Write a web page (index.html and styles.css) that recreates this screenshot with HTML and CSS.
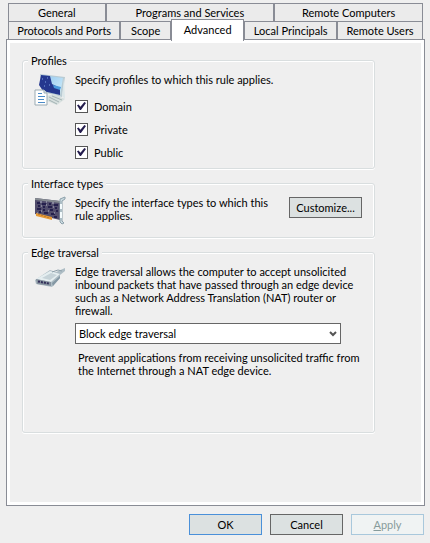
FILE: index.html
```
<!DOCTYPE html>
<html lang="en">
<head>
  <meta charset="UTF-8">
  <meta name="viewport" content="width=device-width, initial-scale=1.0">
  <title>Rule Properties</title>
  <link rel="stylesheet" href="styles.css">
</head>
<body>
  <form class="dialog">
    <div class="tabs" role="tablist">
      <div class="tab-row">
        <button type="button" class="tab tab-general" role="tab">General</button>
        <button type="button" class="tab tab-programs" role="tab">Programs and Services</button>
        <button type="button" class="tab tab-computers" role="tab">Remote Computers</button>
      </div>
      <div class="tab-row">
        <button type="button" class="tab tab-protocols" role="tab">Protocols and Ports</button>
        <button type="button" class="tab tab-scope" role="tab">Scope</button>
        <button type="button" class="tab tab-advanced active" role="tab" aria-selected="true">Advanced</button>
        <button type="button" class="tab tab-principals" role="tab">Local Principals</button>
        <button type="button" class="tab tab-users" role="tab">Remote Users</button>
      </div>
    </div>

    <div class="panel" role="tabpanel">
      <fieldset class="group profiles">
        <legend>Profiles</legend>
        <div class="group-body">
          <svg class="icon" width="32" height="34" viewBox="0 0 32 34">
            <defs>
              <linearGradient id="screen" x1="0" y1="0" x2="1" y2="1">
                <stop offset="0" stop-color="#8fc4ee"/>
                <stop offset="1" stop-color="#d4f0fb"/>
              </linearGradient>
            </defs>
            <path d="M6 1 L31 4 L28 24 L9 19 Z" fill="#b9cbd3"/>
            <path d="M7 2 L29 5 L26 22 L10 18 Z" fill="url(#screen)"/>
            <path d="M7 2 L16 3 L18 11 L26 15 L26 22 L9 18 L5 12 Z" fill="#25388f"/>
            <path d="M19 12 L27 14 L26 17 L20 15 Z" fill="#4b9ade"/>
            <path d="M8 6h1M11 9h1M13 5h1M10 13h1M15 12h1" stroke="#7ea4e4"/>
            <path d="M13 23 L20 21 L31 26 L23 32 L13 28 Z" fill="#d7e0df"/>
            <path d="M15 24 L25 29 M18 23 L28 27 M15 27 L23 31" stroke="#a4b3b5"/>
            <path d="M30 5 L31 26 L28 23 Z" fill="#dce7e9"/>
            <path d="M1 17 H10 L13 20 V32 H1 Z" fill="#fff" stroke="#9babb3"/>
            <path d="M10 17 V20 H13" fill="#dce9f0" stroke="#9babb3"/>
            <path d="M4 20.5h4M4 23.5h7M4 26.5h6M4 29.5h7" stroke="#4b8bc8"/>
          </svg>
          <div class="content">
            <p>Specify profiles to which this rule applies.</p>
            <div class="checks">
              <label class="check"><input type="checkbox" checked>Domain</label>
              <label class="check"><input type="checkbox" checked>Private</label>
              <label class="check"><input type="checkbox" checked>Public</label>
            </div>
          </div>
        </div>
      </fieldset>

      <fieldset class="group interfaces">
        <legend>Interface types</legend>
        <div class="group-body">
          <svg class="icon" width="32" height="30" viewBox="0 0 32 30">
            <path d="M1 2 L26 5 V24 L1 18 Z" fill="#514d6c"/>
            <path d="M1 2 L26 5 V7 L1 4 Z" fill="#858b91"/>
            <path d="M3 7h3M8 8h4M15 8h2M20 9h4M4 10h2M9 11h2M14 11h4M21 12h2M3 13h4M9 14h2M16 14h3M22 15h2M5 16h2M10 17h4M17 18h4M20 21h3" stroke="#25204d" stroke-width="2"/>
            <path d="M6 6h2M12 6h1M18 7h2M7 10h1M12 9h1M19 11h1M7 15h1M14 15h1M20 17h1M3 17h1" stroke="#b9bccb"/>
            <path d="M2 17 L18 21 V24 L2 20 Z" fill="#e69a35"/>
            <path d="M5 18v1M8 19v1M11 20v1M14 21v1" stroke="#a86824"/>
            <path d="M26 3 L31 1 V3 L28 5 V25 L30 27 L28 28 L26 26 Z" fill="#cadae0" stroke="#8da0aa"/>
            <path d="M27 8v5M27 16v6" stroke="#f4fbfd" stroke-width="2"/>
          </svg>
          <div class="content">
            <p>Specify the interface types to which this<br>rule applies.</p>
          </div>
          <button type="button" class="button customize">Customize...</button>
        </div>
      </fieldset>

      <fieldset class="group traversal">
        <legend>Edge traversal</legend>
        <div class="group-body">
          <svg class="icon" width="32" height="26" viewBox="0 0 32 26">
            <path d="M1 15 L16 5 L22 7 L31 3 L31 6 L26 10 V13 L18 22 L2 19 Z" fill="#aebdc5"/>
            <path d="M2 14 L16 6 L26 9 L17 17 Z" fill="#e5eef0"/>
            <path d="M8 13 L17 8 L23 10 L16 15 Z" fill="#c6d3d8"/>
            <path d="M18 7 L24 5 L28 6" fill="none" stroke="#8da0aa"/>
            <path d="M2 14 L17 17 V21 L3 19 Z" fill="#87939f"/>
            <path d="M4 16.5 L15 18.5" stroke="#322e59" stroke-width="2" stroke-dasharray="2 1"/>
            <path d="M18 18 L26 11 V13 L19 21 Z" fill="#8498a4"/>
          </svg>
          <div class="content">
            <p>Edge traversal allows the computer to accept unsolicited<br>inbound packets that have passed through an edge device<br>such as a Network Address Translation (NAT) router or<br>firewall.</p>
            <div class="select-box">
              <select aria-label="Edge traversal">
                <option>Block edge traversal</option>
              </select>
              <svg class="arrow" width="8" height="6" viewBox="0 0 8 6">
                <path d="M1 1 L4 4 L7 1" fill="none" stroke="#555" stroke-width="2"/>
              </svg>
            </div>
            <p class="hint">Prevent applications from receiving unsolicited traffic from<br>the Internet through a NAT edge device.</p>
          </div>
        </div>
      </fieldset>
    </div>

    <div class="actions">
      <button type="button" class="button default">OK</button>
      <button type="button" class="button">Cancel</button>
      <button type="button" class="button" disabled><u>A</u>pply</button>
    </div>
  </form>
</body>
</html>
```
FILE: styles.css
```
* {
  box-sizing: border-box;
}

body {
  margin: 0;
  background: #efefef;
  color: #000;
  font-family: Lato, "Liberation Sans", sans-serif;
  font-size: 11px;
  line-height: 13px;
}

button,
select,
input {
  margin: 0;
  color: inherit;
  font: inherit;
}

p {
  margin: 0;
  white-space: nowrap;
}

.dialog {
  padding: 3px 5px 0 6px;
}

/* Two rows of tabs */
.tabs {
  padding: 0 2px;
}

.tab-row {
  display: flex;
  height: 18px;
}

.tab {
  flex: 1 1 0;
  padding: 0;
  border: 1px solid #898c95;
  border-bottom: 0;
  background: #ebebeb;
  white-space: nowrap;
}

.tab-general { flex-grow: 97; }
.tab-programs { flex-grow: 169; }
.tab-computers { flex-grow: 149; }
.tab-protocols { flex-grow: 113; }
.tab-scope { flex-grow: 50; }
.tab-advanced { flex-grow: 73; }
.tab-principals { flex-grow: 93; }
.tab-users { flex-grow: 86; }

/* The open tab covers the edge of the panel */
.tab.active {
  position: relative;
  z-index: 1;
  height: 22px;
  margin-top: -2px;
  padding-bottom: 2px;
  background: #fff;
}

.panel {
  padding: 14px 49px 72px 15px;
  border: 1px solid #898c95;
  box-shadow: inset 0 0 0 3px #fff;
}

/* Group boxes */
.group {
  min-width: 0;
  margin: 0 0 8px;
  padding: 0 12px 0 11px;
  border: 1px solid #d9dedf;
  border-radius: 3px;
  box-shadow: inset 1px 1px 0 #fff, inset -1px 0 0 #fff, 0 1px 0 #fff;
}

.group:last-child {
  margin-bottom: 0;
}

.group legend {
  margin-left: -6px;
  padding: 0 3px;
  background: #efefef;
}

.group-body {
  display: flex;
  align-items: flex-start;
}

.icon {
  flex: none;
  margin-right: 9px;
}

.content {
  flex: 1;
}

.profiles .group-body {
  padding: 6px 0 9px;
}

.interfaces .group-body {
  padding: 6px 0 11px;
}

.traversal .group-body {
  padding: 6px 0 55px;
}

/* Checkboxes */
.checks {
  display: flex;
  flex-direction: column;
  align-items: flex-start;
  gap: 10px;
  margin-top: 14px;
}

.check {
  display: flex;
  align-items: center;
  gap: 6px;
}

.check input {
  appearance: none;
  width: 13px;
  height: 13px;
  border: 1px solid #555;
  background: #fff;
}

.check input:checked::before {
  content: "";
  display: block;
  width: 9px;
  height: 8px;
  margin: 1px;
  background: #241c4d;
  clip-path: polygon(0 40%, 18% 32%, 38% 60%, 82% 0, 100% 12%, 44% 100%, 32% 100%);
}

/* Drop-down */
.select-box {
  position: relative;
  width: 266px;
  margin: 6px 0 7px;
}

.select-box select {
  appearance: none;
  display: block;
  width: 100%;
  height: 21px;
  padding: 0 20px 0 3px;
  border: 1px solid #666;
  border-radius: 0;
  background: #fff;
}

.arrow {
  position: absolute;
  top: 8px;
  right: 4px;
  pointer-events: none;
}

.hint {
  padding-left: 3px;
}

/* Push buttons */
.button {
  width: 73px;
  height: 21px;
  padding: 0;
  border: 1px solid #666;
  background: #dce1e1;
}

.customize {
  margin-top: 1px;
}

.button.default {
  border-color: #4a90d9;
}

.button:disabled {
  border-color: #a9c8dc;
  background: #f0f3f3;
  color: #879b9b;
}

.actions {
  display: flex;
  justify-content: flex-end;
  gap: 8px;
  padding: 8px 1px 0 0;
}
```
